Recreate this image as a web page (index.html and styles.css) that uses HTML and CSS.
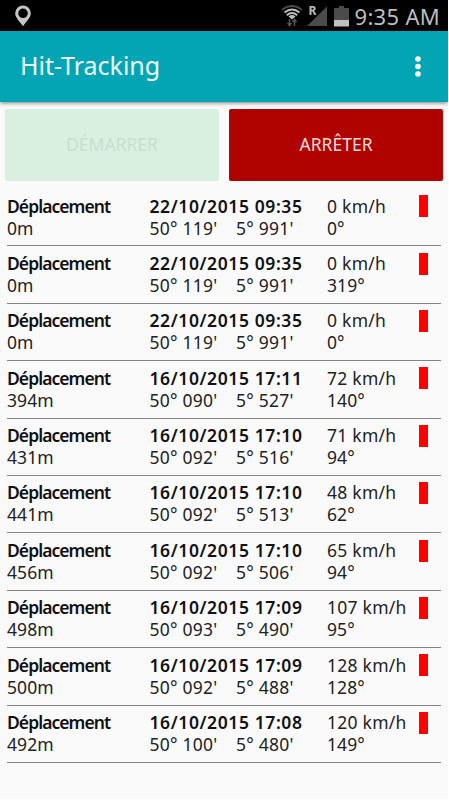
FILE: index.html
```html
<!DOCTYPE html>
<html lang="fr">
<head>
    <meta charset="UTF-8">
    <meta name="viewport" content="width=device-width, initial-scale=1.0">
    <title>Hit-Tracking</title>
    <link rel="stylesheet" href="styles.css">
</head>
<body>

    <div class="screen">
        <div class="status-bar">
            <svg class="pin" viewBox="0 0 16 22">
                <path fill="#c4c4c4" fill-rule="evenodd" d="M8 0.5a7.8 7.8 0 0 1 7.8 7.8c0 4.600-4.400 8-7.800 12.900C4.600 16.300 0.200 12.900 0.200 8.300A7.800 7.800 0 0 1 8 0.500zM8 3.500a4.800 4.800 0 1 0 0 9.600a4.800 4.800 0 0 0 0-9.600z"></path>
            </svg>
            <div class="status-icons">
                <svg class="wifi" viewBox="0 0 22 22" fill="none" stroke-width="2">
                    <path stroke="#4a4a4a" d="M1 4.700Q11-2.700 21 4.700"></path>
                    <path stroke="#bdbdbd" d="M3.500 7.500Q11 1.500 18.500 7.500"></path>
                    <path stroke="#bdbdbd" d="M5.800 10.200Q11 5.800 16.200 10.200"></path>
                    <path fill="#bdbdbd" d="M7.500 11.500Q11 8.700 14.500 11.500L11 14.500z"></path>
                    <path stroke="#555" stroke-width="1.500" d="M8.500 14v6M6.500 18l2 2.500l2-2.500M13.500 21v-6M11.500 17l2-2.500l2 2.500"></path>
                </svg>
                <svg class="signal" viewBox="0 0 20 22">
                    <path fill="#4b4b4b" d="M20 1.500V21H0z"></path>
                    <text x="1.500" y="10">R</text>
                </svg>
                <svg class="battery" viewBox="0 0 15 21">
                    <path fill="#4b4b4b" d="M5 0h5v2h5v12H0V2h5z"></path>
                    <path fill="#c0c0c0" d="M0 14h15v6.500H0z"></path>
                </svg>
                <span class="clock">9:35 AM</span>
            </div>
        </div>

        <div class="app-bar">
            <h1>Hit-Tracking</h1>
            <svg class="menu" viewBox="0 0 6 21" fill="white">
                <circle cx="3" cy="3" r="2.800"></circle>
                <circle cx="3" cy="10.500" r="2.800"></circle>
                <circle cx="3" cy="18" r="2.800"></circle>
            </svg>
        </div>

        <div class="buttons">
            <button class="start" disabled>DÉMARRER</button>
            <button class="stop">ARRÊTER</button>
        </div>

        <div class="list">
            <div class="row">
                <div><b class="name">Déplacement</b><p>0m</p></div>
                <div><b>22/10/2015 09:35</b><p class="coords"><span>50° 119'</span><span>5° 991'</span></p></div>
                <div><p class="speed">0 km/h</p><p>0°</p></div>
                <i class="flag"></i>
            </div>
            <div class="row">
                <div><b class="name">Déplacement</b><p>0m</p></div>
                <div><b>22/10/2015 09:35</b><p class="coords"><span>50° 119'</span><span>5° 991'</span></p></div>
                <div><p class="speed">0 km/h</p><p>319°</p></div>
                <i class="flag"></i>
            </div>
            <div class="row">
                <div><b class="name">Déplacement</b><p>0m</p></div>
                <div><b>22/10/2015 09:35</b><p class="coords"><span>50° 119'</span><span>5° 991'</span></p></div>
                <div><p class="speed">0 km/h</p><p>0°</p></div>
                <i class="flag"></i>
            </div>
            <div class="row">
                <div><b class="name">Déplacement</b><p>394m</p></div>
                <div><b>16/10/2015 17:11</b><p class="coords"><span>50° 090'</span><span>5° 527'</span></p></div>
                <div><p class="speed">72 km/h</p><p>140°</p></div>
                <i class="flag"></i>
            </div>
            <div class="row">
                <div><b class="name">Déplacement</b><p>431m</p></div>
                <div><b>16/10/2015 17:10</b><p class="coords"><span>50° 092'</span><span>5° 516'</span></p></div>
                <div><p class="speed">71 km/h</p><p>94°</p></div>
                <i class="flag"></i>
            </div>
            <div class="row">
                <div><b class="name">Déplacement</b><p>441m</p></div>
                <div><b>16/10/2015 17:10</b><p class="coords"><span>50° 092'</span><span>5° 513'</span></p></div>
                <div><p class="speed">48 km/h</p><p>62°</p></div>
                <i class="flag"></i>
            </div>
            <div class="row">
                <div><b class="name">Déplacement</b><p>456m</p></div>
                <div><b>16/10/2015 17:10</b><p class="coords"><span>50° 092'</span><span>5° 506'</span></p></div>
                <div><p class="speed">65 km/h</p><p>94°</p></div>
                <i class="flag"></i>
            </div>
            <div class="row">
                <div><b class="name">Déplacement</b><p>498m</p></div>
                <div><b>16/10/2015 17:09</b><p class="coords"><span>50° 093'</span><span>5° 490'</span></p></div>
                <div><p class="speed">107 km/h</p><p>95°</p></div>
                <i class="flag"></i>
            </div>
            <div class="row">
                <div><b class="name">Déplacement</b><p>500m</p></div>
                <div><b>16/10/2015 17:09</b><p class="coords"><span>50° 092'</span><span>5° 488'</span></p></div>
                <div><p class="speed">128 km/h</p><p>128°</p></div>
                <i class="flag"></i>
            </div>
            <div class="row">
                <div><b class="name">Déplacement</b><p>492m</p></div>
                <div><b>16/10/2015 17:08</b><p class="coords"><span>50° 100'</span><span>5° 480'</span></p></div>
                <div><p class="speed">120 km/h</p><p>149°</p></div>
                <i class="flag"></i>
            </div>
        </div>
    </div>

</body>
</html>
```
FILE: styles.css
```css
* {
    margin: 0;
    padding: 0;
    box-sizing: border-box;
    font-family: "Noto Sans", sans-serif;
}

body {
    background: white;
}

.screen {
    width: 448px;
    height: 799px;
    background: #fafafa;
    overflow: hidden;
}

.status-bar {
    height: 31px;
    padding: 1px 8px 0 15px;
    background: black;
    display: flex;
    justify-content: space-between;
    align-items: center;
}

.pin {
    width: 16px;
    height: 22px;
}

.status-icons {
    display: flex;
    align-items: center;
}

.wifi {
    width: 22px;
    height: 22px;
    margin-right: 4px;
}

.signal {
    width: 20px;
    height: 22px;
    margin-right: 7px;
    overflow: visible;
}

.signal text {
    font-size: 12px;
    font-weight: bold;
    fill: #bdbdbd;
}

.battery {
    width: 15px;
    height: 21px;
    margin-right: 6px;
}

.clock {
    font-size: 22px;
    line-height: 30px;
    letter-spacing: 0.3px;
    color: #bdbdbd;
}

.app-bar {
    position: relative;
    height: 71px;
    padding: 0 27px 0 20px;
    background: #03a4b4;
    box-shadow: 0 1px 4px rgba(0, 0, 0, 0.5);
    display: flex;
    justify-content: space-between;
    align-items: center;
}

.app-bar h1 {
    padding-bottom: 3px;
    font-size: 25px;
    font-weight: 400;
    color: #eefafa;
}

.menu {
    width: 6px;
    height: 21px;
}

.buttons {
    padding: 7px 5px 0;
    display: flex;
    gap: 10px;
}

.buttons button {
    flex: 1;
    height: 72px;
    padding-bottom: 2px;
    border: none;
    border-radius: 2px;
    font-size: 17.5px;
}

.start {
    background: #d9f0e1;
    color: #c8dfd0;
}

.stop {
    background: #b00300;
    color: #f5dcdc;
}

.list {
    padding: 8px 7px 0;
}

.row {
    height: 57.4px;
    padding-top: 5.5px;
    border-bottom: 1px solid #858585;
    display: grid;
    grid-template-columns: 142.5px 177.5px 92px 9px;
    font-size: 17.5px;
    line-height: 22px;
    letter-spacing: 0.1px;
    color: #222;
    white-space: nowrap;
}

.row b {
    display: block;
    font-weight: 600;
    letter-spacing: 0.6px;
    color: #111;
}

.row .name {
    letter-spacing: -0.95px;
}

.speed {
    letter-spacing: 0.25px;
}

.coords {
    display: grid;
    grid-template-columns: 86.5px 1fr;
    letter-spacing: 0.25px;
}

.flag {
    height: 22px;
    margin-top: 0.8px;
    background: red;
}
```
